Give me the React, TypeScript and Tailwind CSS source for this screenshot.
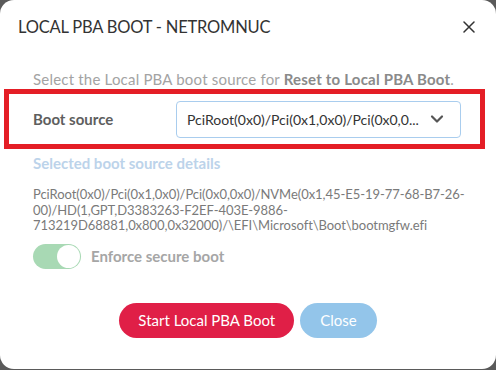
import React from 'react';

const font = { fontFamily: 'Lato, "Open Sans", sans-serif' };

export default function App() {
  return (
    <div className="w-[496px] h-[370px] bg-[#5a5a5a] overflow-hidden" style={font}>
      <div className="w-[496px] h-[369px] bg-white rounded-[14px] flex flex-col">
        {/* Header */}
        <div className="flex items-center justify-between pl-[18px] pr-[21px] h-[54px]">
          <h2 className="text-[16.5px] text-[#333] tracking-[-0.2px]">LOCAL PBA BOOT - NETROMNUC</h2>
          <svg width="12" height="12" viewBox="0 0 12 12" className="text-[#333]">
            <path d="M1 1L11 11M11 1L1 11" stroke="currentColor" strokeWidth="1.5" strokeLinecap="round" />
          </svg>
        </div>

        {/* Body */}
        <div className="flex flex-col pt-[15px]">
          <p className="pl-[33px] text-[15px] leading-[20px] tracking-[0.2px] text-[#a3a3a3]">
            Select the Local PBA boot source for <span className="font-bold text-[#8a8a8a]">Reset to Local PBA Boot</span>.
          </p>

          <div className="ml-[4px] w-[481px] h-[60px] border-[5px] border-[#e41e26] flex items-center pl-[24px]">
            <label className="w-[143px] text-[15px] font-bold text-[#5e5e5e]">Boot source</label>
            <div className="w-[285px] h-[37px] border border-[#a9cdee] rounded-[4px] flex items-center justify-between pl-[10px] pr-[16px]">
              <span className="text-[14px] text-[#333] whitespace-nowrap">PciRoot(0x0)/Pci(0x1,0x0)/Pci(0x0,0...</span>
              <svg width="14" height="10" viewBox="0 0 14 10" className="text-[#555] shrink-0 ml-2">
                <path d="M2 2.5L7 7.5L12 2.5" fill="none" stroke="currentColor" strokeWidth="2.2" strokeLinecap="round" strokeLinejoin="round" />
              </svg>
            </div>
          </div>

          <div className="pl-[33px] pr-[20px] mt-[4px]">
            <h3 className="text-[15px] font-bold text-[#bcd3ea] leading-[20px]">Selected boot source details</h3>
            <p className="mt-[14px] text-[13px] leading-[15.5px] tracking-[-0.05px] text-[#7a7a7a] whitespace-nowrap">
              PciRoot(0x0)/Pci(0x1,0x0)/Pci(0x0,0x0)/NVMe(0x1,45-E5-19-77-68-B7-26-<br />
              00)/HD(1,GPT,D3383263-F2EF-403E-9886-<br />
              713219D68881,0x800,0x32000)/\EFI\Microsoft\Boot\bootmgfw.efi
            </p>
            <div className="flex items-center mt-[10px] gap-[10px]">
              <div className="w-[48px] h-[25px] rounded-full bg-[#a8d9b4] flex items-center justify-end pr-[1px]">
                <div className="w-[23px] h-[23px] rounded-full bg-white" />
              </div>
              <span className="text-[15px] font-bold text-[#a6a6a6]">Enforce secure boot</span>
            </div>
          </div>

          <div className="flex justify-center gap-[6px] mt-[34px]">
            <button className="h-[35px] px-[19px] rounded-full bg-[#e01f47] text-white text-[15px]">Start Local PBA Boot</button>
            <button className="h-[35px] px-[20px] rounded-full bg-[#93c5ea] text-white text-[15px]">Close</button>
          </div>
        </div>
      </div>
    </div>
  );
}
